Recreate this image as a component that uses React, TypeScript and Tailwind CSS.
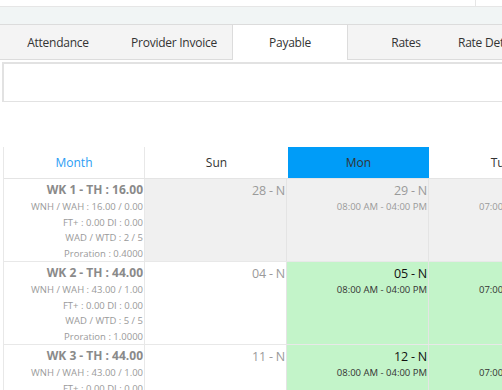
const font = { fontFamily: '"Open Sans", "Noto Sans", sans-serif' }

const tabs = ["Attendance", "Provider Invoice", "Payable", "Rates"]

type Week = {
  wk: string
  wnh: string
  ft: string
  wad: string
  pro: string
  sun: string
  mon: string
  current: boolean
}

const weeks: Week[] = [
  { wk: "WK 1 - TH : 16.00", wnh: "WNH / WAH : 16.00 / 0.00", ft: "FT+ : 0.00 DI : 0.00", wad: "WAD / WTD : 2 / 5", pro: "Proration : 0.4000", sun: "28 - N", mon: "29 - N", current: false },
  { wk: "WK 2 - TH : 44.00", wnh: "WNH / WAH : 43.00 / 1.00", ft: "FT+ : 0.00 DI : 0.00", wad: "WAD / WTD : 5 / 5", pro: "Proration : 1.0000", sun: "04 - N", mon: "05 - N", current: true },
  { wk: "WK 3 - TH : 44.00", wnh: "WNH / WAH : 43.00 / 1.00", ft: "FT+ : 0.00 DI : 0.00", wad: "WAD / WTD : 5 / 5", pro: "Proration : 1.0000", sun: "11 - N", mon: "12 - N", current: true },
]

function DayCell({ day, time, current, shaded }: { day: string; time?: string; current: boolean; shaded: string }) {
  return (
    <div className={`w-[142px] shrink-0 border-r border-[#e4e4e4] pr-[1px] pt-[3px] text-right ${shaded}`}>
      <div className={`text-[12.5px] leading-[18px] tracking-[-0.2px] ${current ? "text-[#111]" : "text-[#9a9a9a]"}`}>{day}</div>
      {time && (
        <div className={`text-[9.5px] leading-[14px] ${current ? "text-[#333]" : "text-[#9a9a9a]"}`}>{time}</div>
      )}
    </div>
  )
}

export default function App() {
  return (
    <div className="w-[502px] h-[390px] overflow-hidden bg-white" style={font}>
      {/* top strip */}
      <div className="h-[7px] border-b border-[#e6e6e6] flex">
        <div className="w-[476px] border-r border-[#e6e6e6]" />
      </div>
      <div className="h-[18px] bg-[#f1f5f5] border-b border-[#dcdcdc]" />

      {/* tabs */}
      <div className="flex h-[35px] bg-[#f4f4f4] w-[620px]">
        {tabs.map((t, i) => (
          <div
            key={i}
            className={`w-[116px] shrink-0 flex items-center justify-center pt-[1px] text-[12px] tracking-[-0.25px] text-[#333] ${
              i === 2 ? "bg-white border-x border-[#dcdcdc]" : "border-b border-[#dcdcdc]"
            }`}
          >
            {t}
          </div>
        ))}
        <div className="w-[150px] shrink-0 flex items-center pt-[1px] -ml-[6px] text-[12px] tracking-[-0.25px] text-[#333] border-b border-[#dcdcdc] whitespace-nowrap">
          Rate Details
        </div>
      </div>

      {/* filter box */}
      <div className="ml-[2px] mt-[2px] h-[40px] border-t-2 border-l-2 border-b border-[#e2e2e2] bg-white" />

      {/* calendar */}
      <div className="ml-[3px] mt-[45px] border-l border-[#e8e8e8] w-[700px]">
        <div className="flex h-[32px] border-b border-[#e4e4e4] text-[12px]">
          <div className="w-[141px] shrink-0 border-r border-[#e8e8e8] flex items-center justify-center text-[#2a9df4]">Month</div>
          <div className="w-[143px] shrink-0 flex items-center justify-center text-[#333]">Sun</div>
          <div className="w-[142px] shrink-0 border-r border-white bg-[#009cf8] flex items-center justify-center text-[#333]">Mon</div>
          <div className="w-[142px] shrink-0 flex items-center justify-center text-[#333]">Tue</div>
        </div>

        {weeks.map((w, i) => (
          <div key={i} className="flex h-[83px] border-b border-[#e8e8e8]">
            <div className="w-[141px] shrink-0 border-r border-[#e8e8e8] text-right pr-[1px] pt-[1px]">
              <div className="text-[12px] font-bold leading-[19px] text-[#8a8a8a]">{w.wk}</div>
              <div className="text-[9.5px] leading-[15.5px] text-[#9a9a9a]">{w.wnh}</div>
              <div className="text-[9.5px] leading-[15.5px] text-[#9a9a9a]">{w.ft}</div>
              <div className="text-[9.5px] leading-[15.5px] text-[#9a9a9a]">{w.wad}</div>
              <div className="text-[9.5px] leading-[15.5px] text-[#9a9a9a]">{w.pro}</div>
            </div>
            <DayCell day={w.sun} current={false} shaded={w.current ? "bg-white" : "bg-[#f0f0f0]"} />
            <DayCell day={w.mon} time="08:00 AM - 04:00 PM" current={w.current} shaded={w.current ? "bg-[#c3f4c9]" : "bg-[#f0f0f0]"} />
            <div className={`w-[142px] shrink-0 pt-[3px] pl-[50px] ${w.current ? "bg-[#c3f4c9]" : "bg-[#f0f0f0]"}`}>
              <div className="h-[18px]" />
              <div className={`text-[9.5px] leading-[14px] ${w.current ? "text-[#333]" : "text-[#9a9a9a]"}`}>07:00 AM - 03:00 PM</div>
            </div>
          </div>
        ))}
      </div>
    </div>
  )
}
